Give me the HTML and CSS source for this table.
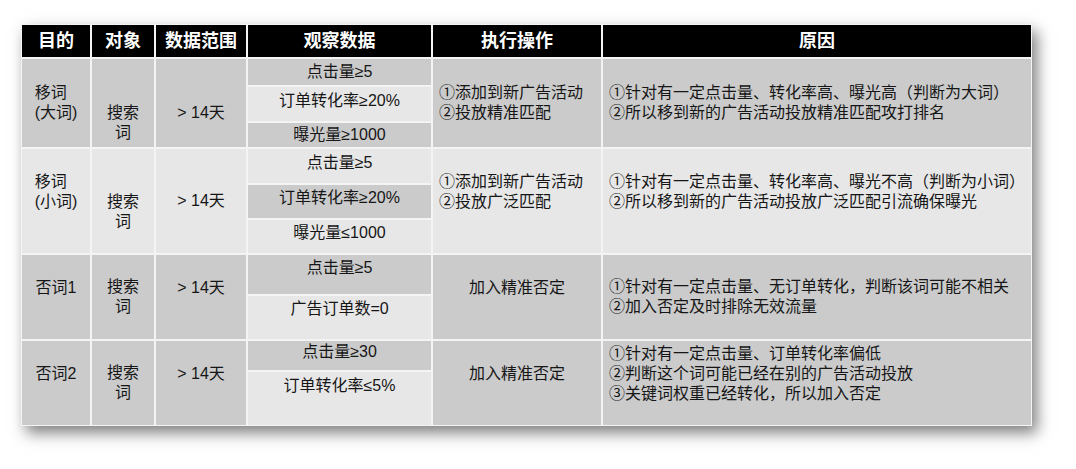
FILE: index.html
```html
<!DOCTYPE html>
<html lang="zh-CN">
<head>
<meta charset="utf-8">
<title>搜索词处理规则</title>
<link rel="stylesheet" href="styles.css">
</head>
<body>
<div class="sheet">
  <div class="grid">
    <div class="th">目的</div>
    <div class="th">对象</div>
    <div class="th">数据范围</div>
    <div class="th">观察数据</div>
    <div class="th">执行操作</div>
    <div class="th">原因</div>

    <!-- 移词（大词） -->
    <div class="td dark span3"><span class="stack">移词<br>(大词)</span></div>
    <div class="td dark span3 drop-l">搜索<br>词</div>
    <div class="td dark span3 drop-s">&gt; 14天</div>
    <div class="td dark sub">点击量≥5</div>
    <div class="td dark span3 left">①添加到新广告活动<br>②投放精准匹配</div>
    <div class="td dark span3 left">①针对有一定点击量、转化率高、曝光高（判断为大词）<br>②所以移到新的广告活动投放精准匹配攻打排名</div>
    <div class="td light sub lift-xs">订单转化率≥20%</div>
    <div class="td dark sub">曝光量≥1000</div>

    <!-- 移词（小词） -->
    <div class="td light span3 lift-l"><span class="stack">移词<br>(小词)</span></div>
    <div class="td light span3 drop-m">搜索<br>词</div>
    <div class="td light span3">&gt; 14天</div>
    <div class="td light sub lift-xs">点击量≥5</div>
    <div class="td light span3 left lift-l">①添加到新广告活动<br>②投放广泛匹配</div>
    <div class="td light span3 left lift-l">①针对有一定点击量、转化率高、曝光不高（判断为小词）<br>②所以移到新的广告活动投放广泛匹配引流确保曝光</div>
    <div class="td dark sub lift-xs">订单转化率≥20%</div>
    <div class="td light sub lift-xs">曝光量≤1000</div>

    <!-- 否词1 -->
    <div class="td dark span2 lift-l">否词1</div>
    <div class="td dark span2">搜索<br>词</div>
    <div class="td dark span2 lift-l">&gt; 14天</div>
    <div class="td dark sub lift-s">点击量≥5</div>
    <div class="td dark span2 lift-l">加入精准否定</div>
    <div class="td dark span2 left">①针对有一定点击量、无订单转化，判断该词可能不相关<br>②加入否定及时排除无效流量</div>
    <div class="td light sub lift-m">广告订单数=0</div>

    <!-- 否词2 -->
    <div class="td dark span2 lift-l">否词2</div>
    <div class="td dark span2">搜索<br>词</div>
    <div class="td dark span2 lift-l">&gt; 14天</div>
    <div class="td dark sub lift-xs">点击量≥30</div>
    <div class="td dark span2 lift-l">加入精准否定</div>
    <div class="td dark span2 left lift-l">①针对有一定点击量、订单转化率偏低<br>②判断这个词可能已经在别的广告活动投放<br>③关键词权重已经转化，所以加入否定</div>
    <div class="td light sub lift-xl">订单转化率≤5%</div>
  </div>
</div>
</body>
</html>
```

FILE: styles.css
```css
html, body {
  margin: 0;
  padding: 0;
  background: #ffffff;
}

body {
  font-family: "Liberation Sans", "Noto Sans CJK SC", sans-serif;
  color: #161616;
  min-height: 469px;
}

.sheet {
  padding: 24px 0 43px 21px;
}

.grid {
  display: grid;
  width: max-content;
  grid-template-columns: 68px 62px 90px 183px 168px 428px;
  grid-template-rows: 32px 26px 34px 24px 34px 33px 33px 39px 43px 29px 53px;
  gap: 2px;
  padding: 1px;
  background: #f4f4f4;
  box-shadow: 5px 7px 14px rgba(0, 0, 0, 0.5);
}

.th {
  background: #000000;
  color: #ffffff;
  font-weight: bold;
  font-size: 18px;
  line-height: 22px;
  display: flex;
  align-items: center;
  justify-content: center;
  text-align: center;
}

.td {
  font-size: 16px;
  line-height: 20px;
  display: flex;
  align-items: center;
  justify-content: center;
  text-align: center;
  padding: 0 6px;
  white-space: nowrap;
}

.dark { background: #cbcbcb; }
.light { background: #e7e7e7; }

.span3 { grid-row: span 3; }
.span2 { grid-row: span 2; }

.left {
  justify-content: flex-start;
  text-align: left;
}

.stack {
  display: block;
  text-align: left;
}

/* vertical nudges of text inside a cell */
.lift-xs { padding-bottom: 7px; }
.lift-s { padding-bottom: 13px; }
.lift-m { padding-bottom: 17px; }
.lift-l { padding-bottom: 19px; }
.lift-xl { padding-bottom: 25px; }
.drop-s { padding-top: 20px; }
.drop-m { padding-top: 22px; }
.drop-l { padding-top: 39px; }
```
